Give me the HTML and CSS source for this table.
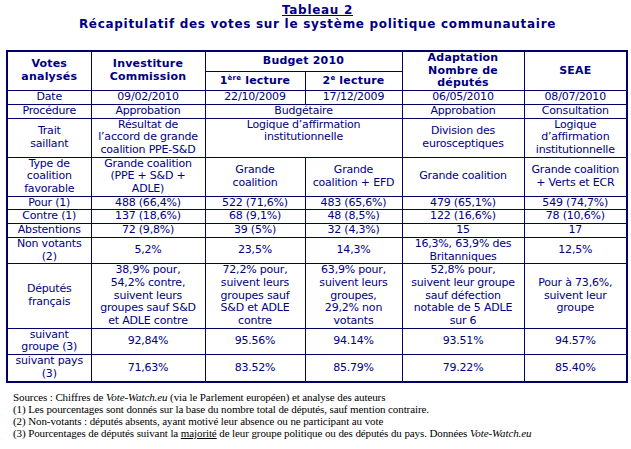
FILE: index.html
```html
<!DOCTYPE html>
<html lang="fr">
<head>
<meta charset="utf-8">
<title>Tableau 2</title>
<link rel="stylesheet" href="styles.css">
</head>
<body>
<div class="title">
  <div class="t1"><u>Tableau 2</u></div>
  <div class="t2">Récapitulatif des votes sur le système politique communautaire</div>
</div>
<table class="votes">
  <colgroup>
    <col class="c0"><col class="c1"><col class="c2"><col class="c3"><col class="c4"><col class="c5">
  </colgroup>
  <tr class="hd">
    <th rowspan="2">Votes<br>analysés</th>
    <th rowspan="2">Investiture<br>Commission</th>
    <th colspan="2">Budget 2010</th>
    <th rowspan="2">Adaptation<br>Nombre de<br>députés</th>
    <th rowspan="2">SEAE</th>
  </tr>
  <tr class="hd2">
    <th>1<sup>ère</sup> lecture</th>
    <th>2<sup>e</sup> lecture</th>
  </tr>
  <tr><td>Date</td><td>09/02/2010</td><td>22/10/2009</td><td>17/12/2009</td><td>06/05/2010</td><td>08/07/2010</td></tr>
  <tr><td>Procédure</td><td>Approbation</td><td colspan="2">Budgétaire</td><td>Approbation</td><td>Consultation</td></tr>
  <tr><td>Trait<br>saillant</td><td>Résultat de<br>l’accord de grande<br>coalition PPE-S&amp;D</td><td colspan="2" class="top">Logique d’affirmation<br>institutionnelle</td><td>Division des<br>eurosceptiques</td><td>Logique<br>d’affirmation<br>institutionnelle</td></tr>
  <tr><td>Type de<br>coalition<br>favorable</td><td>Grande coalition<br>(PPE + S&amp;D +<br>ADLE)</td><td>Grande<br>coalition</td><td>Grande<br>coalition + EFD</td><td>Grande coalition</td><td>Grande coalition<br>+ Verts et ECR</td></tr>
  <tr><td>Pour (1)</td><td>488 (66,4%)</td><td>522 (71,6%)</td><td>483 (65,6%)</td><td>479 (65,1%)</td><td>549 (74<span class="squiggle">,7</span>%)</td></tr>
  <tr><td>Contre (1)</td><td>137 (18,6%)</td><td>68 (9,1%)</td><td>48 (8,5%)</td><td>122 (16,6%)</td><td>78 (10,6%)</td></tr>
  <tr><td>Abstentions</td><td>72 (9,8%)</td><td>39 (5%)</td><td>32 (4,3%)</td><td>15</td><td>17</td></tr>
  <tr><td>Non votants<br>(2)</td><td>5,2%</td><td>23,5%</td><td>14,3%</td><td>16,3%, 63,9% des<br>Britanniques</td><td>12,5%</td></tr>
  <tr><td>Députés<br>français</td><td>38,9% pour,<br>54,2% contre,<br>suivent leurs<br>groupes sauf S&amp;D<br>et ADLE contre</td><td>72,2% pour,<br>suivent leurs<br>groupes sauf<br>S&amp;D et ADLE<br>contre</td><td>63,9% pour,<br>suivent leurs<br>groupes,<br>29,2% non<br>votants</td><td>52,8% pour,<br>suivent leur groupe<br>sauf défection<br>notable de 5 ADLE<br>sur 6</td><td>Pour à 73,6%,<br>suivent leur<br>groupe</td></tr>
  <tr><td>suivant<br>groupe (3)</td><td>92,84%</td><td>95.56%</td><td>94.14%</td><td>93.51%</td><td>94.57%</td></tr>
  <tr><td>suivant pays<br>(3)</td><td>71,63%</td><td>83.52%</td><td>85.79%</td><td>79.22%</td><td>85.40%</td></tr>
</table>
<div class="notes">
  <p>Sources : Chiffres de <i>Vote-Watch.eu</i> (via le Parlement européen) et analyse des auteurs</p>
  <p>(1) Les pourcentages sont donnés sur la base du nombre total de députés, sauf mention contraire.</p>
  <p>(2) Non-votants : députés absents, ayant motivé leur absence ou ne participant au vote</p>
  <p>(3) Pourcentages de députés suivant la <u>majorité</u> de leur groupe politique ou des députés du pays. Données <i>Vote-Watch.eu</i></p>
</div>
</body>
</html>
```
FILE: styles.css
```css
html, body {
  margin: 0;
  padding: 0;
  background: #ffffff;
}
body {
  width: 631px;
  height: 449px;
  overflow: hidden;
  font-family: "DejaVu Sans", Verdana, sans-serif;
  color: #000080;
}
.title {
  text-align: center;
  font-weight: bold;
  font-size: 12px;
  letter-spacing: 0.7px;
  line-height: 14px;
  padding-top: 3px;
  padding-left: 4px;
  color: #000080;
}
.title u {
  text-underline-offset: 1px;
}
.votes {
  margin: 19px 0 0 6px;
  border-collapse: collapse;
  table-layout: fixed;
  width: 620px;
  border: 2px solid #000066;
  font-size: 11px;
  letter-spacing: -0.2px;
  line-height: 12.7px;
}
.c0 { width: 84px; }
.c1 { width: 114px; }
.c2 { width: 100px; }
.c3 { width: 97px; }
.c4 { width: 122px; }
.c5 { width: 103px; }
.votes th, .votes td {
  border: 1px solid #000066;
  padding: 0;
  text-align: center;
  vertical-align: middle;
  white-space: nowrap;
  overflow: hidden;
}
.votes th {
  font-weight: bold;
  letter-spacing: 0.2px;
}
.votes sup {
  font-size: 7px;
  line-height: 0;
  vertical-align: 4px;
}
.votes td.top {
  vertical-align: top;
}
.squiggle {
  text-decoration: underline wavy #3aa63a;
  text-decoration-thickness: 1px;
  text-underline-offset: 1px;
}
.notes {
  margin: 8px 0 0 13px;
  font-family: "Liberation Serif", "Times New Roman", serif;
  font-size: 11px;
  letter-spacing: -0.1px;
  line-height: 12px;
  color: #000000;
}
.notes p {
  margin: 0;
}
```
